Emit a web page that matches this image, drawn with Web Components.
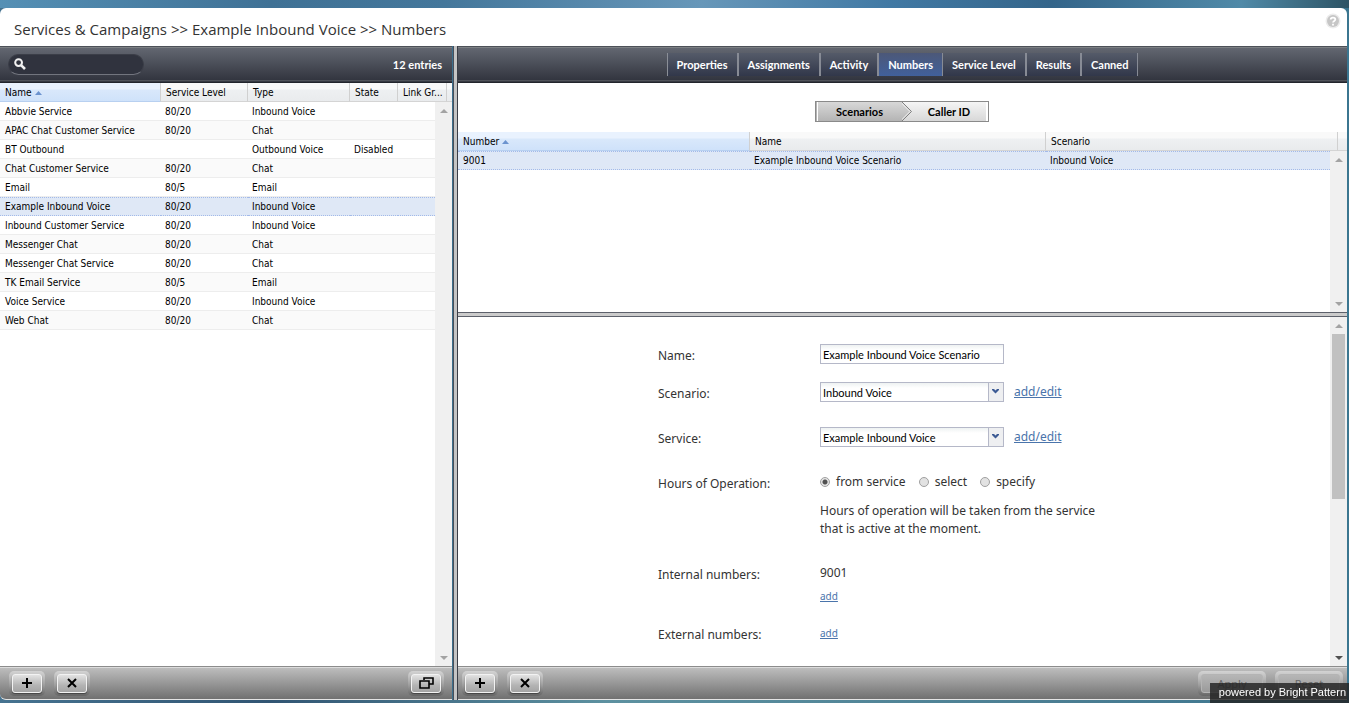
<!DOCTYPE html>
<html lang="en">
<head>
<meta charset="utf-8">
<title>Services &amp; Campaigns</title>
<style>
html, body { height: 100%; margin: 0; }
body { font-family: "DejaVu Sans Condensed", "DejaVu Sans", sans-serif; font-size: 10px; color: #000; overflow: hidden; }
</style>
</head>
<body>
<admin-console></admin-console>
<script>
const define = (name, html, setup) => customElements.define(name, class extends HTMLElement {
  connectedCallback() {
    if (this.shadowRoot) return;
    const root = this.attachShadow({ mode: 'open' });
    const t = document.createElement('template');
    t.innerHTML = typeof html === 'function' ? html(this) : html;
    root.append(t.content.cloneNode(true));
    if (setup) setup(this, root);
  }
});

/* dark bar above each pane */
define('dark-bar', `
<style>
:host { display: flex; align-items: center; box-sizing: border-box; height: 37px; flex: none; padding-bottom: 1px;
  border-top: 1px solid #4c5058; border-bottom: 1px solid #22252c; color: #fff;
  background: linear-gradient(#7c8083 0 1px, #626670 1px, #5b5f69 6px, #32353f 33px, #50535a 33px 34px, #373a42 34px);
  font: bold 11px Lato, sans-serif; }
</style><slot></slot>`);

define('search-box', `
<style>
:host { display: flex; align-items: center; box-sizing: border-box; width: 136px; height: 21px; margin-left: 8px; padding-left: 5px;
  border-radius: 11px; background: #30333e; border: 1px solid #3b3e48; border-bottom-color: #72757e; }
input { flex: 1; min-width: 0; margin: 0 8px 0 4px; padding: 0; border: 0; background: none; outline: 0; color: #fff; font: 11px Lato, sans-serif; }
svg { flex: none; }
</style>
<svg width="12" height="12" viewBox="0 0 12 12" fill="none" stroke="#f2f2f2"><circle cx="4.6" cy="4.6" r="3.4" stroke-width="2"/><path d="M7.3 7.3L11 11" stroke-width="2.6"/></svg>
<input type="text" aria-label="Search">`);

define('tab-strip', `
<style>
:host { display: block; margin: 0 auto; }
nav { display: flex; border-left: 1px solid #8b8f98; }
a { display: block; height: 23px; line-height: 23px; padding: 0 9px; box-sizing: border-box; color: #fff; text-decoration: none;
  border-right: 2px solid #878b95; background: linear-gradient(#555b69, #31374a); }
a:last-child, a.on { border-right-width: 1px; }
a.on { background: linear-gradient(#4c5878, #41609b); }
</style>
<nav><a href="#p">Properties</a><a href="#a">Assignments</a><a href="#v">Activity</a><a href="#n" class="on" aria-current="page">Numbers</a><a href="#s">Service Level</a><a href="#r">Results</a><a href="#c">Canned</a></nav>`);

/* scroll track: the thumb attribute shows the handle */
define('scroll-track', `
<style>
:host { display: flex; flex-direction: column; align-items: center; justify-content: space-between; box-sizing: border-box;
  flex: none; width: 17px; padding: 7px 0 6px; background: #f0f0f0; color: #a3a3a3; }
i { display: none; width: 13px; height: 165px; margin: 6px 0 auto; background: #c1c1c1; }
:host([thumb]) i { display: block; }
:host([thumb]) .dn { color: #505050; }
svg { display: block; fill: currentColor; }
</style>
<svg width="8" height="4" viewBox="0 0 8 4"><path d="M4 0L8 4H0z"/></svg><i></i>
<svg class="dn" width="8" height="4" viewBox="0 0 8 4"><path d="M4 4L8 0H0z"/></svg>`);

define('data-grid', el => {
  const cols = JSON.parse(el.getAttribute('cols')), rows = JSON.parse(el.getAttribute('rows'));
  const sel = el.getAttribute('selected');
  const group = extra => `<colgroup>${cols.map((c, i) => `<col${!extra && i === cols.length - 1 ? '' : c[1] ? ` style="width:${c[1]}"` : ''}>`).join('')}${extra ? `<col style="width:${el.getAttribute('tail')}px">` : ''}</colgroup>`;
  return `
<style>
:host { display: flex; flex-direction: column; min-height: 0; background: #fff; }
table { border-collapse: separate; border-spacing: 0; table-layout: fixed; width: 100%; }
th, td { box-sizing: border-box; height: 19px; padding: 0 0 0 5px; text-align: left; font-weight: normal; white-space: nowrap; line-height: 17px; }
thead th { border-right: 1px solid #d0d0d0; border-bottom: 1px solid #d4d4d4; background: linear-gradient(#f9f9f9 0 6px, #eef0f2 7px, #e9ebed); }
thead th:last-child { border-right: 0; padding: 0; }
thead th.sorted { border-bottom-color: #b8d0f0; background: linear-gradient(#e9f2fe 0 6px, #d9e8fb 7px, #cfe2fa); }
th svg { margin-left: 3px; vertical-align: 1px; }
.view { flex: 1; display: flex; min-height: 0; }
.body { flex: 1; min-width: 0; overflow: hidden; }
tbody td { border-bottom: 1px solid #ededed; }
tbody tr:nth-child(even) td { background: #fafafa; }
tbody tr.sel td { background: #dfe8f6; border-top: 1px dotted #a3bae9; border-bottom: 1px dotted #a3bae9; line-height: 16px; }
td + td { padding-left: 4px; }
</style>
<table>${group(true)}<thead><tr>${cols.map((c, i) => `<th${i ? '' : ' class="sorted" aria-sort="ascending"'}>${c[0]}${i ? '' : '<svg width="7" height="4" viewBox="0 0 7 4"><path d="M3.500 0L7 4H0z" fill="#6b93cf"/></svg>'}</th>`).join('')}<th></th></tr></thead></table>
<div class="view"><div class="body"><table>${group(false)}<tbody>${rows.map(r => `<tr${r[0] === sel ? ' class="sel"' : ''}>${cols.map((c, i) => `<td>${r[i] || ''}</td>`).join('')}</tr>`).join('')}</tbody></table></div><scroll-track></scroll-track></div>`;
});

define('bottom-bar', `
<style>
:host { display: flex; align-items: center; gap: 9px; flex: none; box-sizing: border-box; height: 34px;
  border-top: 1px solid #8c8c8c; border-bottom: 1px solid #e4e4e4;
  background: linear-gradient(#dcdcdc 0 1px, #bdbdbd 1px, #707070); }
</style><slot></slot>`);

define('bevel-button', el => `
<style>
:host { display: block; padding: 3px; border-radius: 5px; background: linear-gradient(rgba(255,255,255,.4), rgba(255,255,255,.08) 60%, rgba(0,0,0,.15)); }
:host([push]) { margin-left: auto; }
button { display: flex; align-items: center; justify-content: center; box-sizing: border-box; width: 30px; height: 19px; padding: 0;
  border: 1px solid #f2f2f2; border-radius: 3px; background: linear-gradient(#e2e2e2, #b4b4b4 60%, #a4a4a4); box-shadow: 0 1px 1px #444;
  color: #000; font: 11px "Noto Sans", sans-serif; }
:host([wide]) button { width: 62px; border-color: #b4b4b4; background: linear-gradient(#b6b6b6, #9a9a9a); box-shadow: none; color: #686868; line-height: 17px; }
</style>
<button type="button" ${el.hasAttribute('wide') ? 'disabled' : ''} aria-label="${el.getAttribute('label')}"><slot></slot></button>`);

define('step-switch', `
<style>
:host { display: flex; justify-content: center; flex: none; padding: 18px 2px 10px 0; }
nav { display: flex; height: 21px; box-sizing: border-box; border: 1px solid #8a8a8a; box-shadow: inset 1px 0 #b5b5b5; padding: 0 1px; }
button { width: 85px; padding: 0; border: 0; font: bold 11px/19px Lato, sans-serif; color: #000; background: linear-gradient(#f5f5f5, #d8d8d8); }
button.on { background: linear-gradient(#d8d8d8, #b4b4b4); border-left: 1px solid #fff; }
button:last-child { width: 74px; border-right: 1px solid #fff; }
</style>
<nav><button type="button" class="on">Scenarios</button>
<svg width="11" height="19" viewBox="0 0 11 19"><defs><linearGradient id="a" x2="0" y2="1"><stop stop-color="#d8d8d8"/><stop offset="1" stop-color="#b4b4b4"/></linearGradient><linearGradient id="b" x2="0" y2="1"><stop stop-color="#f5f5f5"/><stop offset="1" stop-color="#d8d8d8"/></linearGradient></defs><path d="M0 0H11V19H0z" fill="url(#b)"/><path d="M0 0L9.500 9.500L0 19z" fill="url(#a)"/><path d="M-1.500 0L8 9.500L-1.500 19" fill="none" stroke="#f4f4f4"/><path d="M0 0L9.500 9.500L0 19" fill="none" stroke="#808080"/></svg>
<button type="button">Caller ID</button></nav>`);

define('combo-box', el => `
<style>
:host { display: block; position: relative; width: 184px; height: 20px; }
select { appearance: none; width: 100%; height: 100%; box-sizing: border-box; padding: 0 20px 0 2px; margin: 0; border: 1px solid #b5b8c8; border-radius: 0;
  background: linear-gradient(#eef2f2, #fff 5px); font: 11px Lato, sans-serif; color: #000; outline: 0; }
svg { position: absolute; top: 1px; right: 1px; pointer-events: none; }
</style>
<select aria-label="${el.getAttribute('label')}"><option>${el.getAttribute('value')}</option></select>
<svg width="15" height="18" viewBox="0 0 15 18"><path d="M0 0H15V18H0z" fill="#eeeff1"/><path d="M.5 0V18" stroke="#b5b8c8"/><path d="M4 6H6L7.500 7.500L9 6H11V7L7.500 10.500L4 7z" fill="#3c5a94"/></svg>`);

define('scenario-form', `
<style>
:host { display: flex; flex: 1; min-height: 0; background: #fff; }
form { flex: 1; display: grid; grid-template-columns: 162px 310px; grid-template-rows: 38px 45px 45px 91px 60px 30px; justify-content: center; align-content: start;
  padding-top: 27px; overflow: hidden; box-sizing: border-box; color: #333; font: 12px/18px "Noto Sans", sans-serif; }
.lab { padding-top: 3px; }
.line { display: flex; align-items: center; gap: 10px; height: 20px; }
input[type=text] { width: 184px; height: 20px; box-sizing: border-box; margin: 0; padding: 0 2px; border: 1px solid #b5b8c8; background: linear-gradient(#eef2f2, #fff 5px); font: 11px Lato, sans-serif; color: #000; outline: 0; }
a { color: #4a74ab; }
.small { font-size: 10px; }
.radios { gap: 13px; }
.radios label { display: flex; align-items: center; gap: 6px; }
input[type=radio] { appearance: none; width: 10px; height: 10px; margin: 0; box-sizing: border-box; border: 1px solid #a0a0a0; border-radius: 50%; background: #e2e2e2; }
input[type=radio]:checked { background: radial-gradient(circle, #505050 0 2px, #e4e4e4 3px); }
p { margin: 10px 0 0; }
.num { margin-bottom: 3px; }
</style>
<form>
<label class="lab" for="name">Name:</label><div class="line"><input type="text" id="name" value="Example Inbound Voice Scenario"></div>
<div class="lab">Scenario:</div><div class="line"><combo-box label="Scenario" value="Inbound Voice"></combo-box><a href="#scenario">add/edit</a></div>
<div class="lab">Service:</div><div class="line"><combo-box label="Service" value="Example Inbound Voice"></combo-box><a href="#service">add/edit</a></div>
<div class="lab">Hours of Operation:</div><div><div class="line radios"><label><input type="radio" name="h" checked>from service</label><label><input type="radio" name="h">select</label><label><input type="radio" name="h">specify</label></div><p>Hours of operation will be taken from the service<br>that is active at the moment.</p></div>
<div class="lab">Internal numbers:</div><div><div class="line num">9001</div><div class="line"><a class="small" href="#internal">add</a></div></div>
<div class="lab">External numbers:</div><div class="line"><a class="small" href="#external">add</a></div>
</form>
<scroll-track thumb></scroll-track>`);

define('powered-by', `
<style>:host { position: fixed; right: 0; bottom: 0; box-sizing: border-box; height: 20px; padding: 0 3px 0 9px; background: rgba(34,34,34,.82); color: #fff; font: 11px/19px "Liberation Sans", sans-serif; }</style>powered by Bright Pattern`);

define('admin-console', () => {
  const plus = '<svg width="10" height="10" viewBox="0 0 10 10"><path d="M5 0V10M0 5H10" stroke="#000" stroke-width="2"/></svg>';
  const cross = '<svg width="10" height="10" viewBox="0 0 10 10"><path d="M1 1L9 9M9 1L1 9" stroke="#000" stroke-width="2"/></svg>';
  const copy = '<svg width="15" height="12" viewBox="0 0 15 12" fill="none" stroke="#000" stroke-width="1.600"><path d="M5 3V1H14V7H10"/><path d="M1 4H10V11H1z"/></svg>';
  const services = [['Abbvie Service','80/20','Inbound Voice'],['APAC Chat Customer Service','80/20','Chat'],['BT Outbound','','Outbound Voice','Disabled'],['Chat Customer Service','80/20','Chat'],['Email','80/5','Email'],['Example Inbound Voice','80/20','Inbound Voice'],['Inbound Customer Service','80/20','Inbound Voice'],['Messenger Chat','80/20','Chat'],['Messenger Chat Service','80/20','Chat'],['TK Email Service','80/5','Email'],['Voice Service','80/20','Inbound Voice'],['Web Chat','80/20','Chat']];
  return `
<style>
:host { display: flex; flex-direction: column; box-sizing: border-box; height: 100vh; padding: 8px 2px 3px 0;
  background: linear-gradient(90deg, #5590b5, #3f7195 20%, #44779b 33%, #6797b9 52%, #4179a4 66%, #34658a 78%, #508aa8 92%, #2d5465) top / 100% 8px no-repeat, linear-gradient(90deg, #467390, #315573 20%, #5d91a0 45%, #4a7d92 80%, #3b7690); }
header { flex: none; display: flex; justify-content: space-between; height: 38px; background: #fff; border-radius: 6px 6px 0 0; }
h1 { margin: 0; padding-left: 14px; font: 15px/43px "Open Sans", sans-serif; color: #333; }
header svg { margin: 5px 6px 0 0; }
main { flex: 1; display: flex; min-height: 0; }
.left { flex: none; width: 452px; display: flex; flex-direction: column; min-height: 0; }
.right { flex: 1; min-width: 0; display: flex; flex-direction: column; }
.vsplit { flex: none; width: 6px; box-sizing: border-box; border-left: 1px solid #3c6f8c; border-right: 1px solid #3a3d46; background: #c4c4c4; box-shadow: inset 1px 0 #4a4f5a; }
.hsplit { flex: none; height: 5px; box-sizing: border-box; border: 1px solid #5d616b; border-width: 1px 0; background: #cbcbcb; }
.top { flex: 0 0 229px; display: flex; flex-direction: column; min-height: 0; background: #fff; }
.count { margin: 0 10px 0 auto; }
data-grid { flex: 1; }
.left bottom-bar { border-bottom-left-radius: 6px; padding: 0 8px 0 9px; }
.right bottom-bar { padding: 0 4px; }
</style>
<header><h1>Services &amp; Campaigns &gt;&gt; Example Inbound Voice &gt;&gt; Numbers</h1>
<svg width="16" height="16" viewBox="0 0 16 16" role="img" aria-label="Help"><circle cx="8" cy="8" r="7.500" fill="#ececec"/><circle cx="8" cy="8" r="6" fill="#c6c6c6"/><path d="M5.700 6.500C5.700 3.900 10.300 3.900 10.300 6.500C10.300 7.900 8 7.900 8 9.600M8 10.800V12.400" fill="none" stroke="#fff" stroke-width="1.800"/></svg></header>
<main>
<section class="left"><dark-bar><search-box></search-box><span class="count">12 entries</span></dark-bar>
<data-grid selected="Example Inbound Voice" tail="5" cols='[["Name","161px"],["Service Level","87px"],["Type","102px"],["State","48px"],["Link Gr...",""]]' rows='${JSON.stringify(services)}'></data-grid>
<bottom-bar><bevel-button label="Add">${plus}</bevel-button><bevel-button label="Delete">${cross}</bevel-button><bevel-button push label="Clone">${copy}</bevel-button></bottom-bar></section>
<div class="vsplit"></div>
<section class="right"><dark-bar><tab-strip></tab-strip></dark-bar>
<div class="top"><step-switch></step-switch>
<data-grid selected="9001" tail="9" cols='[["Number","292px"],["Name","296px"],["Scenario",""]]' rows='[["9001","Example Inbound Voice Scenario","Inbound Voice"]]'></data-grid></div>
<div class="hsplit"></div>
<scenario-form></scenario-form>
<bottom-bar><bevel-button label="Add">${plus}</bevel-button><bevel-button label="Delete">${cross}</bevel-button><bevel-button push wide label="Apply">Apply</bevel-button><bevel-button wide label="Reset">Reset</bevel-button></bottom-bar></section>
</main>
<powered-by></powered-by>`;
});
</script>
</body>
</html>
